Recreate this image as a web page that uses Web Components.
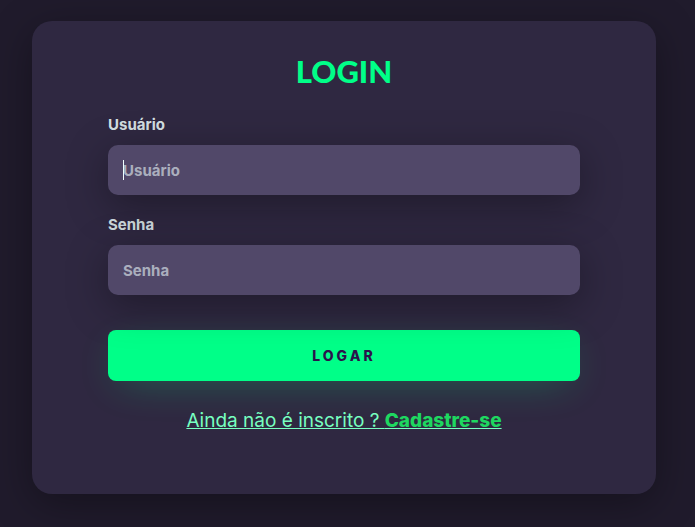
<!DOCTYPE html>
<html lang="pt-BR">
<head>
<meta charset="utf-8">
<title>Login</title>
<style>
html, body { height: 100%; }
body { margin: 0; background: #201b2c; font-family: Inter, "Noto Sans", sans-serif; }
</style>
</head>
<body>
<login-page>
  <login-card heading="LOGIN">
    <text-field label="Usuário" name="usuario" type="text" active></text-field>
    <text-field label="Senha" name="senha" type="password"></text-field>
    <submit-button>LOGAR</submit-button>
    <signup-link slot="footer" href="#cadastro">Ainda não é inscrito ? <b slot="action">Cadastre-se</b></signup-link>
  </login-card>
</login-page>
<script>
class BaseElement extends HTMLElement {
  render(html) {
    this.attachShadow({ mode: "open" }).innerHTML = "<style>*{box-sizing:border-box}</style>" + html;
  }
}
customElements.define("login-page", class extends BaseElement {
  connectedCallback() {
    this.render(`<style>
      :host { display: flex; flex-direction: column; box-sizing: border-box; min-height: 100%; padding: 21px 39px 33px 32px; }
      main { display: flex; flex: 1; flex-direction: column; }
      ::slotted(*) { flex: 1; }
    </style><main><slot></slot></main>`);
  }
});
customElements.define("login-card", class extends BaseElement {
  connectedCallback() {
    this.render(`<style>
      :host { display: block; box-sizing: border-box; padding: 30px 76px; background: #2f2841; border-radius: 20px; box-shadow: 0 10px 40px #00000056; }
      h1 { margin: 0 0 22px; text-align: center; color: #00ff88; font: 900 31px/40px Lato, sans-serif; }
      form { display: flex; flex-direction: column; gap: 18px; margin-bottom: 26px; }
    </style><h1>${this.getAttribute("heading")}</h1><form><slot></slot></form><slot name="footer"></slot>`);
  }
});
customElements.define("text-field", class extends BaseElement {
  connectedCallback() {
    const label = this.getAttribute("label");
    this.render(`<style>
      :host { display: block; }
      label { display: block; margin-bottom: 8px; color: #f0ffffde; font: 700 15px/24px Inter, sans-serif; }
      .box { position: relative; }
      input { display: block; width: 100%; height: 50px; margin: 0; padding: 0 15px; border: 0; border-radius: 10px; outline: none; background: #514869; color: #f0ffffde; caret-color: transparent; box-shadow: 0 10px 40px #00000056; font: 700 15px/20px Inter, sans-serif; }
      input::placeholder { color: #f0ffff94; opacity: 1; }
      .caret { display: none; position: absolute; left: 15px; top: 15px; width: 1px; height: 20px; background: #f0ffff; pointer-events: none; }
      :host([active]) .caret { display: block; }
      input:not(:placeholder-shown) { caret-color: #f0ffff; }
      input:not(:placeholder-shown) + .caret { display: none !important; }
    </style><label for="field">${label}</label><div class="box"><input id="field" name="${this.getAttribute("name")}" type="${this.getAttribute("type")}" placeholder="${label}"><span class="caret"></span></div>`);
  }
});
customElements.define("submit-button", class extends BaseElement {
  connectedCallback() {
    this.render(`<style>
      :host { display: block; padding-top: 17px; }
      button { display: block; width: 100%; height: 51px; padding: 0; border: 0; border-radius: 8px; background: #00ff88; color: #2b134b; box-shadow: 0 10px 40px -12px #00ff8052; font: 800 14px/20px Inter, sans-serif; letter-spacing: 3px; }
    </style><button type="button"><slot></slot></button>`);
  }
});
customElements.define("signup-link", class extends BaseElement {
  connectedCallback() {
    this.render(`<style>
      :host { display: block; text-align: center; font-size: 19px; line-height: 28px; }
      a { color: #77ffc0; text-decoration: underline; text-decoration-thickness: 1px; }
      ::slotted(b) { color: #1ed760; font-weight: 800; }
    </style><a href="${this.getAttribute("href")}"><slot></slot><slot name="action"></slot></a>`);
  }
});
</script>
</body>
</html>
